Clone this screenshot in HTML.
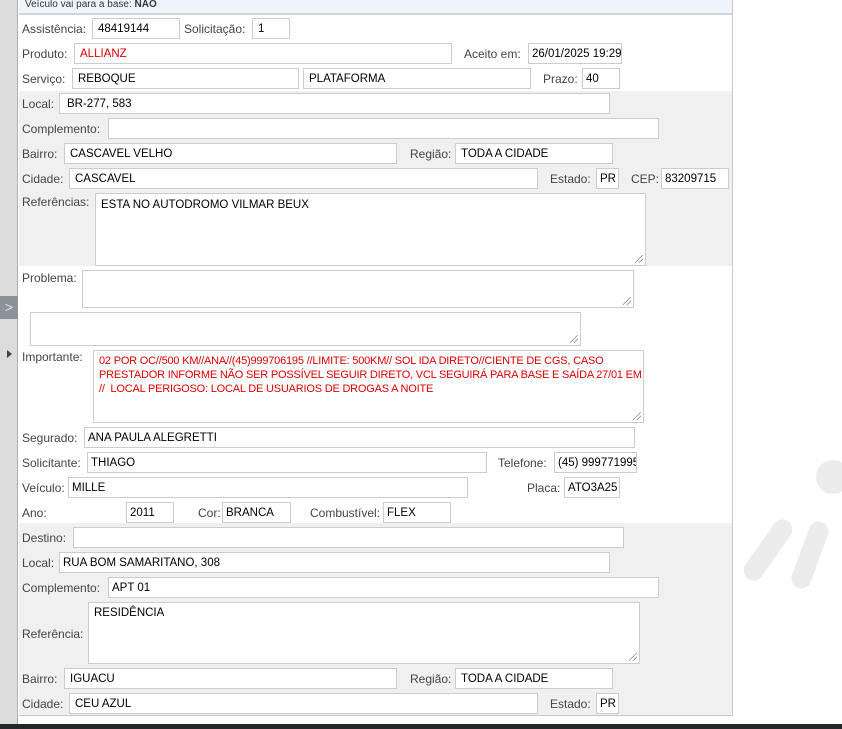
<!DOCTYPE html>
<html><head><meta charset="utf-8"><style>
*{margin:0;padding:0;box-sizing:border-box}
body{width:842px;height:729px;overflow:hidden;background:#fff;position:relative;font-family:"Liberation Sans","DejaVu Sans",sans-serif;font-size:12px;color:#444}
.a{position:absolute}
.l{position:absolute;color:#444;white-space:nowrap;line-height:14px}
.i{position:absolute;height:21px;background:#fff;border:1px solid #ccc;color:#000;font-size:11.5px;padding:3px 0 0 5px;white-space:nowrap;overflow:hidden;line-height:14px}
.t{position:absolute;background:#fff;border:1px solid #ccc;color:#000;font-size:11.5px;padding:4px 5px;line-height:14px}
.t:after{content:"";position:absolute;right:2px;bottom:2px;width:8px;height:8px;background:linear-gradient(135deg,transparent 45%,#888 45%,#888 52%,transparent 52%,transparent 70%,#888 70%,#888 77%,transparent 77%)}
.g{position:absolute;left:19px;width:713px;background:#f0f0f0}
.blob{position:absolute;background:#ececec;border-radius:50%}
</style></head><body>
<div class="blob" style="left:816px;top:460px;width:34px;height:34px"></div>
<div class="blob" style="left:800px;top:520px;width:20px;height:70px;transform:rotate(20deg);border-radius:10px"></div>
<div class="blob" style="left:758px;top:515px;width:20px;height:70px;transform:rotate(35deg);border-radius:10px"></div>
<div class="a" style="left:0;top:0;width:18px;height:729px;background:#dcdcdc;border-right:1px solid #b0b0b0"></div>
<div class="a" style="left:0;top:296px;width:18px;height:23px;background:#8c9299;color:#dfe3e6;font-size:14px;line-height:22px;text-align:center">&gt;</div>
<div class="a" style="left:7px;top:350px;width:0;height:0;border-left:5px solid #444;border-top:4px solid transparent;border-bottom:4px solid transparent"></div>
<div class="a" style="left:19px;top:0;width:714px;height:716px;border-right:1px solid #c8c8c8;border-bottom:1px solid #c8c8c8"></div>
<div class="a" style="left:19px;top:0;width:713px;height:15px;background:#eef6fc;border-bottom:2px solid #d0d4d8;font-size:10px;color:#333;padding-left:6px;line-height:9px">Veículo vai para a base: <b>NAO</b></div>
<div class="g" style="top:91px;height:175px"></div>
<div class="g" style="top:523px;height:192px"></div>

<div class="l" style="left:22px;top:22px">Assistência:</div><div class="i" style="left:92px;top:18px;width:88px">48419144</div>
<div class="l" style="left:184px;top:22px">Solicitação:</div><div class="i" style="left:252px;top:18px;width:38px">1</div>
<div class="l" style="left:22px;top:47px">Produto:</div><div class="i" style="left:74px;top:43px;width:378px;color:#e00000">ALLIANZ</div>
<div class="l" style="left:464px;top:47px">Aceito em:</div><div class="i" style="left:528px;top:43px;width:94px;padding-left:3px">26/01/2025 19:29</div>
<div class="l" style="left:22px;top:72px">Serviço:</div><div class="i" style="left:72px;top:68px;width:227px">REBOQUE</div><div class="i" style="left:303px;top:68px;width:228px">PLATAFORMA</div>
<div class="l" style="left:543px;top:72px">Prazo:</div><div class="i" style="left:582px;top:68px;width:38px;padding-left:3px">40</div>
<div class="l" style="left:22px;top:97px">Local:</div><div class="i" style="left:59px;top:93px;width:551px;padding-left:7px">BR-277, 583</div>
<div class="l" style="left:22px;top:122px">Complemento:</div><div class="i" style="left:108px;top:118px;width:551px"></div>
<div class="l" style="left:22px;top:147px">Bairro:</div><div class="i" style="left:64px;top:143px;width:333px">CASCAVEL VELHO</div>
<div class="l" style="left:410px;top:147px">Região:</div><div class="i" style="left:455px;top:143px;width:158px">TODA A CIDADE</div>
<div class="l" style="left:22px;top:172px">Cidade:</div><div class="i" style="left:69px;top:168px;width:469px">CASCAVEL</div>
<div class="l" style="left:550px;top:172px">Estado:</div><div class="i" style="left:596px;top:168px;width:23px;padding-left:3px">PR</div>
<div class="l" style="left:631px;top:172px">CEP:</div><div class="i" style="left:661px;top:168px;width:68px;padding-left:3px">83209715</div>
<div class="l" style="left:22px;top:195px">Referências:</div><div class="t" style="left:95px;top:193px;width:551px;height:73px">ESTA NO AUTODROMO VILMAR BEUX</div>
<div class="l" style="left:22px;top:271px">Problema:</div><div class="t" style="left:82px;top:270px;width:552px;height:38px"></div>
<div class="t" style="left:30px;top:312px;width:551px;height:34px"></div>
<div class="l" style="left:22px;top:350px">Importante:</div><div class="t" style="left:93px;top:350px;width:551px;height:73px;color:#e00000;font-size:11px;letter-spacing:-0.2px;padding:3px 1px 3px 5px;white-space:nowrap;overflow:hidden">02 POR OC//500 KM//ANA//(45)999706195 //LIMITE: 500KM// SOL IDA DIRETO//CIENTE DE CGS, CASO<br>PRESTADOR INFORME NÃO SER POSSÍVEL SEGUIR DIRETO, VCL SEGUIRÁ PARA BASE E SAÍDA 27/01 EM HC<br>//&nbsp; LOCAL PERIGOSO: LOCAL DE USUARIOS DE DROGAS A NOITE</div>
<div class="l" style="left:22px;top:431px">Segurado:</div><div class="i" style="left:84px;top:427px;width:551px;padding-left:3px">ANA PAULA ALEGRETTI</div>
<div class="l" style="left:22px;top:456px">Solicitante:</div><div class="i" style="left:87px;top:452px;width:400px;padding-left:3px">THIAGO</div>
<div class="l" style="left:498px;top:456px">Telefone:</div><div class="i" style="left:554px;top:452px;width:83px;padding-left:3px">(45) 999771995</div>
<div class="l" style="left:22px;top:481px">Veículo:</div><div class="i" style="left:68px;top:477px;width:400px;padding-left:3px">MILLE</div>
<div class="l" style="left:527px;top:481px">Placa:</div><div class="i" style="left:564px;top:477px;width:56px;padding-left:3px">ATO3A25</div>
<div class="l" style="left:22px;top:506px">Ano:</div><div class="i" style="left:126px;top:502px;width:48px;padding-left:3px">2011</div>
<div class="l" style="left:198px;top:506px">Cor:</div><div class="i" style="left:222px;top:502px;width:69px;padding-left:3px">BRANCA</div>
<div class="l" style="left:310px;top:506px">Combustível:</div><div class="i" style="left:383px;top:502px;width:68px;padding-left:3px">FLEX</div>
<div class="l" style="left:22px;top:531px">Destino:</div><div class="i" style="left:73px;top:527px;width:551px"></div>
<div class="l" style="left:22px;top:556px">Local:</div><div class="i" style="left:59px;top:552px;width:551px;padding-left:3px">RUA BOM SAMARITANO, 308</div>
<div class="l" style="left:22px;top:581px">Complemento:</div><div class="i" style="left:108px;top:577px;width:551px;padding-left:3px">APT 01</div>
<div class="l" style="left:22px;top:627px">Referência:</div><div class="t" style="left:88px;top:602px;width:552px;height:62px;padding-top:3px">RESIDÊNCIA</div>
<div class="l" style="left:22px;top:672px">Bairro:</div><div class="i" style="left:64px;top:668px;width:333px">IGUACU</div>
<div class="l" style="left:410px;top:672px">Região:</div><div class="i" style="left:455px;top:668px;width:158px">TODA A CIDADE</div>
<div class="l" style="left:22px;top:697px">Cidade:</div><div class="i" style="left:69px;top:693px;width:469px">CEU AZUL</div>
<div class="l" style="left:550px;top:697px">Estado:</div><div class="i" style="left:596px;top:693px;width:23px;padding-left:3px">PR</div>
<div class="a" style="left:0;top:724px;width:842px;height:5px;background:#23262a"></div>
</body></html>
